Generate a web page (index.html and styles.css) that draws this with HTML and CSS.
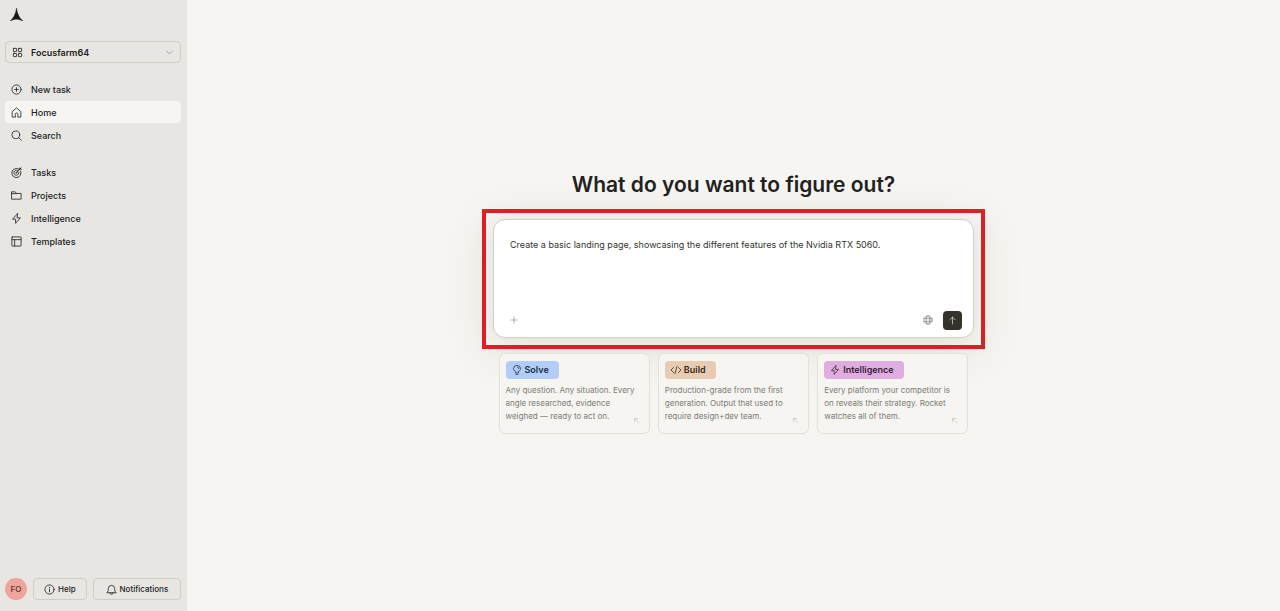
FILE: index.html
```html
<!DOCTYPE html>
<html lang="en">
<head>
    <meta charset="UTF-8">
    <meta name="viewport" content="width=device-width, initial-scale=1.0">
    <title>Home</title>
    <link rel="stylesheet" href="styles.css">
</head>
<body>
    <aside class="sidebar">
        <a class="logo" href="#" aria-label="Rocket">
            <svg viewBox="0 0 12 12" width="13" height="13"><path d="M6 0C6.500 4.500 8.500 9.500 12 12C9.500 10.900 8 10.400 6 10.400S2.500 10.900 0 12C3.500 9.500 5.500 4.500 6 0Z" fill="#161616" stroke="#161616" stroke-width=".4"/></svg>
        </a>

        <button class="workspace" type="button">
            <svg class="icon" viewBox="0 0 24 24"><rect x="3" y="3" width="7" height="7" rx="1"/><rect x="14" y="3" width="7" height="7" rx="1"/><rect x="3" y="14" width="7" height="7" rx="1"/><rect x="14" y="14" width="7" height="7" rx="1"/></svg>
            <span>Focusfarm64</span>
            <svg class="icon chevron" viewBox="0 0 24 24"><path d="M4 8l8 8 8-8"/></svg>
        </button>

        <nav class="menu">
            <a href="#"><svg class="icon" viewBox="0 0 24 24"><circle cx="12" cy="12" r="10"/><path d="M12 8v8M8 12h8"/></svg>New task</a>
            <a href="#" class="active"><svg class="icon" viewBox="0 0 24 24"><path d="M9 22H2.500V10L12 2l9.500 8v12H15v-6a3 3 0 0 0-6 0z"/></svg>Home</a>
            <a href="#"><svg class="icon" viewBox="0 0 24 24"><circle cx="10.500" cy="10.500" r="8.500"/><path d="M16.500 16.500L22.500 22.500"/></svg>Search</a>
        </nav>

        <nav class="menu">
            <a href="#"><svg class="icon" viewBox="0 0 24 24"><path d="M17 4.500A10 10 0 1 0 21 9"/><path d="M14 7.500A5.500 5.500 0 1 0 17 11"/><path d="M11 13l8-8M19 5V2M19 5h3.500M19 5l3-3"/><circle cx="11.500" cy="12.500" r="1"/></svg>Tasks</a>
            <a href="#"><svg class="icon" viewBox="0 0 24 24"><path d="M2 4h7l3 3.500h10V20H2zM2 8h10"/></svg>Projects</a>
            <a href="#"><svg class="icon" viewBox="0 0 24 24"><path d="M14 1.500L3.500 13.500H10V22.500L20.500 10.500H14z"/></svg>Intelligence</a>
            <a href="#"><svg class="icon" viewBox="0 0 24 24"><rect x="2" y="2" width="20" height="20" rx="1"/><path d="M2 8h20M8 8v14"/></svg>Templates</a>
        </nav>

        <div class="sidebar-footer">
            <button class="avatar" type="button">FO</button>
            <button class="footer-btn" type="button">
                <svg class="icon" viewBox="0 0 24 24"><circle cx="12" cy="12" r="10"/><path d="M12 11v6M12 7v1"/></svg>Help
            </button>
            <button class="footer-btn wide" type="button">
                <svg class="icon" viewBox="0 0 24 24"><path d="M2.500 18.500c2-2 2.500-3.500 2.500-8.500a7 7 0 0 1 14 0c0 5 .5 6.500 2.500 8.500zM8.500 19a3.500 3.500 0 0 0 7 0"/></svg>Notifications
            </button>
        </div>
    </aside>

    <main class="main">
        <h1>What do you want to figure out?</h1>

        <div class="highlight">
            <form class="composer">
                <textarea aria-label="Prompt" spellcheck="false">Create a basic landing page, showcasing the different features of the Nvidia RTX 5060.</textarea>
                <div class="toolbar">
                    <button class="tool attach" type="button" aria-label="Attach">
                        <svg class="icon" viewBox="0 0 24 24"><path d="M12 2v20M2 12h20"/></svg>
                    </button>
                    <button class="tool globe" type="button" aria-label="Web search">
                        <svg class="icon" viewBox="0 0 24 24"><circle cx="12" cy="12" r="10"/><ellipse cx="12" cy="12" rx="4.500" ry="10"/><path d="M3 8.500h18M3 15.500h18"/></svg>
                    </button>
                    <button class="send" type="submit" aria-label="Send">
                        <svg class="icon" viewBox="0 0 24 24"><path d="M12 21V3M5 10l7-7 7 7"/></svg>
                    </button>
                </div>
            </form>
        </div>

        <div class="cards">
            <a class="card" href="#">
                <span class="tag solve"><svg class="icon" viewBox="0 0 24 24"><path d="M8.500 18v-2.500C5.500 14 3.500 11.500 3.500 9a8.500 8 0 0 1 17 0c0 2.500-2 5-5 6.500V18zM9 22.500h6M13 5a4 4 0 0 1 3.500 3.500"/></svg>Solve</span>
                <p>Any question. Any situation. Every angle researched, evidence weighed — ready to act on.</p>
                <svg class="icon corner" viewBox="0 0 24 24"><path d="M20 20L5 5M5 17V5h12"/></svg>
            </a>
            <a class="card" href="#">
                <span class="tag build"><svg class="icon" viewBox="0 0 24 24"><path d="M6 6l-6 6 6 6M18 6l6 6-6 6M14.500 3l-5 18"/></svg>Build</span>
                <p>Production-grade from the first generation. Output that used to require design+dev team.</p>
                <svg class="icon corner" viewBox="0 0 24 24"><path d="M20 20L5 5M5 17V5h12"/></svg>
            </a>
            <a class="card" href="#">
                <span class="tag intel"><svg class="icon" viewBox="0 0 24 24"><path d="M14 1.500L3.500 13.500H10V22.500L20.500 10.500H14z"/></svg>Intelligence</span>
                <p>Every platform your competitor is on reveals their strategy. Rocket watches all of them.</p>
                <svg class="icon corner" viewBox="0 0 24 24"><path d="M20 20L5 5M5 17V5h12"/></svg>
            </a>
        </div>
    </main>
</body>
</html>
```
FILE: styles.css
```css
* {
    box-sizing: border-box;
}

body {
    display: flex;
    min-height: 100vh;
    margin: 0;
    background-color: #f6f5f1;
    color: #22221f;
    font-family: Inter, sans-serif;
    font-size: 9px;
}

a {
    color: inherit;
    text-decoration: none;
}

button {
    padding: 0;
    border: none;
    background: none;
    color: inherit;
    font: inherit;
    cursor: pointer;
}

.icon {
    flex: none;
    width: 11px;
    height: 11px;
    fill: none;
    stroke: currentColor;
    stroke-width: 1.8;
    stroke-linejoin: round;
    stroke-linecap: round;
}

/* sidebar */
.sidebar {
    display: flex;
    flex-direction: column;
    flex: none;
    width: 187px;
    padding: 8px 6px 11px 5px;
    background-color: #e7e6e2;
    font-weight: 500;
}

.logo {
    display: flex;
    padding: 0 5px;
    margin-bottom: 20px;
}

.workspace {
    display: flex;
    align-items: center;
    gap: 8px;
    height: 22px;
    padding: 0 6px;
    border: 1px solid #cecdc8;
    border-radius: 4px;
    font-weight: 600;
}

.chevron {
    width: 9px;
    height: 9px;
    margin-left: auto;
    color: #888883;
}

.menu {
    display: flex;
    flex-direction: column;
    gap: 1px;
    margin-top: 15px;
}

.menu a {
    display: flex;
    align-items: center;
    gap: 9px;
    height: 22px;
    padding: 0 6px;
    border-radius: 4px;
}

.menu .active {
    background-color: #f6f5f1;
}

.sidebar-footer {
    display: flex;
    align-items: center;
    gap: 6px;
    margin-top: auto;
    font-size: 8px;
}

.avatar {
    flex: none;
    width: 22px;
    height: 22px;
    border-radius: 50%;
    background-color: #f0a59c;
    color: #5c2c28;
}

.footer-btn {
    display: flex;
    align-items: center;
    justify-content: center;
    gap: 3px;
    flex: 3;
    height: 22px;
    border: 1px solid #cecdc8;
    border-radius: 4px;
}

.wide {
    flex: 5;
}

/* main */
.main {
    display: flex;
    flex-direction: column;
    align-items: center;
    justify-content: center;
    flex: 1;
    padding-bottom: 8px;
}

h1 {
    margin: 0 0 9px;
    font-size: 21px;
    font-weight: 600;
    line-height: 30px;
}

.highlight {
    width: 100%;
    max-width: 503px;
    padding: 6px 7px 7px;
    border: 4px solid #e01f27;
    box-shadow: 0 8px 48px rgba(60, 55, 40, 0.06);
}

.composer {
    display: flex;
    flex-direction: column;
    padding: 18px 11px 7px 16px;
    border: 1px solid #d0cfc9;
    border-radius: 12px;
    background-color: #fff;
    box-shadow: 0 4px 24px rgba(60, 55, 40, 0.12);
}

textarea {
    height: 73px;
    padding: 0;
    border: none;
    outline: none;
    resize: none;
    background: none;
    color: #33332f;
    font: 9px/14px Inter, sans-serif;
}

.toolbar {
    display: flex;
    align-items: center;
    gap: 10px;
}

.tool {
    display: flex;
    color: #85857f;
}

.tool .icon {
    width: 10px;
    height: 10px;
}

.attach .icon {
    width: 8px;
    height: 8px;
}

.globe {
    margin-left: auto;
}

.send {
    display: flex;
    align-items: center;
    justify-content: center;
    width: 19px;
    height: 19px;
    border-radius: 4px;
    background-color: #35322b;
    color: #e8e6e0;
}

.send .icon {
    width: 9px;
    height: 9px;
}

/* cards */
.cards {
    display: grid;
    grid-template-columns: repeat(3, 1fr);
    gap: 8px;
    width: 100%;
    max-width: 470px;
    margin-top: 4px;
}

.card {
    position: relative;
    padding: 7px 6px 10px;
    border: 1px solid #e1e0db;
    border-radius: 6px;
    background-color: #f6f5f1;
}

.tag {
    display: inline-flex;
    align-items: center;
    gap: 3px;
    height: 18px;
    padding: 0 10px 0 6px;
    border-radius: 4px;
    font-weight: 600;
    vertical-align: top;
}

.tag .icon {
    width: 10px;
    height: 10px;
}

.solve {
    background-color: #b2cdf8;
    color: #1c2b47;
}

.build {
    background-color: #e7ccb3;
    color: #36271a;
}

.intel {
    background-color: #dfaddf;
    color: #391c3a;
}

.card p {
    margin: 5px 0 0;
    color: #7b7b75;
    font-size: 8px;
    line-height: 13px;
}

.corner {
    position: absolute;
    right: 9px;
    bottom: 9px;
    width: 7px;
    height: 7px;
    color: #b5b4ae;
}
```
